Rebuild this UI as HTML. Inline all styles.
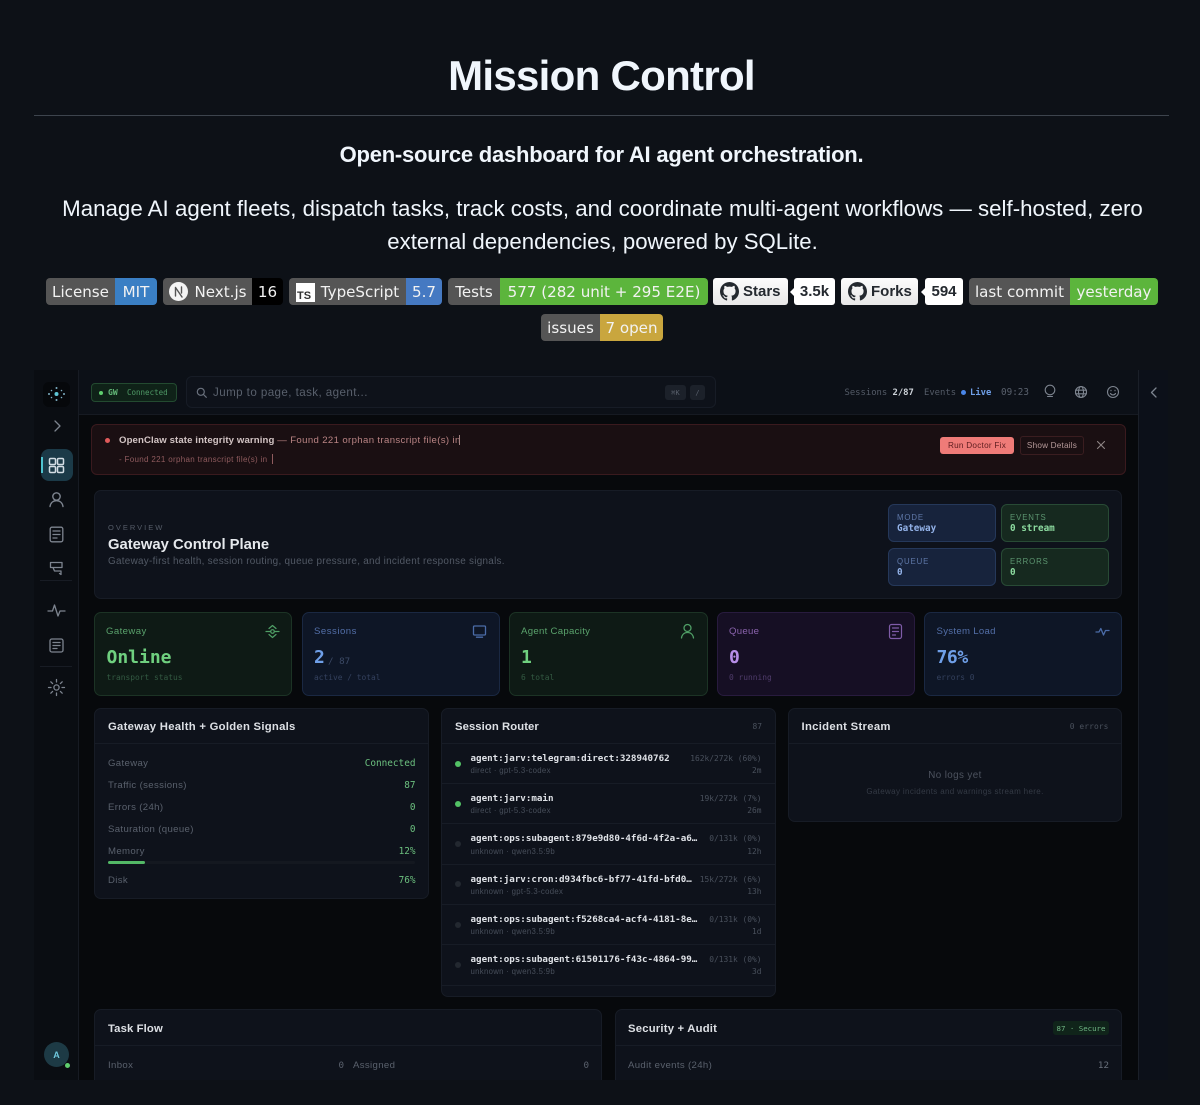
<!DOCTYPE html>
<html lang="en"><head><meta charset="utf-8"><title>Mission Control</title>
<style>
html,body{margin:0;padding:0;background:#0d1117;width:1200px;height:1105px;overflow:hidden}
body{position:relative;font-family:"Liberation Sans",sans-serif;color:#f0f6fc}
.a,.t,.m,svg.i{position:absolute}
.t,.m{white-space:nowrap;line-height:14px;height:14px;margin-top:1px}
.m{font-family:"DejaVu Sans Mono","Liberation Mono",monospace}
.c{text-align:center}
#clip{position:absolute;left:0;top:0;width:1200px;height:1080px;overflow:hidden}
svg.i{fill:none;stroke-linecap:round;stroke-linejoin:round}
.b{position:absolute;height:27px;line-height:28px;font-family:"DejaVu Sans",sans-serif;font-size:15.1px;color:#f2f2f2;text-align:center;white-space:nowrap;overflow:hidden}
.gh{position:absolute;height:27px;border-radius:3px;line-height:28px;font-weight:bold;font-size:15px;color:#24292f;white-space:nowrap}
.p{position:absolute;background:#0e121b;border:1px solid #171c26;border-radius:7px;box-sizing:border-box}
.st{position:absolute;top:612px;height:84px;border-radius:7px;box-sizing:border-box;border:1px solid}
.tile{position:absolute;width:108px;height:38px;border-radius:6px;box-sizing:border-box;border:1px solid}
.ln{position:absolute;height:1px;background:#171c26}
.lab{font-size:9.6px;color:#5a616d;letter-spacing:.35px}
.val{font-size:9.4px;color:#6cc07f;text-align:right}
.sn{font-size:9.2px;color:#dfe2e7;font-weight:bold}
.ss{font-size:7.8px;color:#474e5a;letter-spacing:.3px}
.sr{font-size:7.9px;color:#4a515d;text-align:right}
.big{height:20px;line-height:20px;font-size:18px;font-weight:bold;margin-top:2px}
</style></head><body>

<div class="t c" style="left:0;width:1203px;top:46px;height:60px;line-height:60px;font-size:42px;font-weight:bold;letter-spacing:-.7px;margin-top:0">Mission Control</div>
<div class="a" style="left:34px;top:115px;width:1135px;height:1px;background:#3d444d"></div>
<div class="t c" style="left:0;width:1203px;top:139px;height:30px;line-height:31px;font-size:22px;font-weight:bold;letter-spacing:-.22px;margin-top:0">Open-source dashboard for AI agent orchestration.</div>
<div class="t c" style="left:0;width:1205px;top:193px;height:30px;line-height:31px;font-size:22.3px;margin-top:0">Manage AI agent fleets, dispatch tasks, track costs, and coordinate multi-agent workflows — self-hosted, zero</div>
<div class="t c" style="left:0;width:1205px;top:226px;height:30px;line-height:31px;font-size:22.2px;margin-top:0">external dependencies, powered by SQLite.</div>

<!-- badges -->
<div class="b" style="left:46px;top:278px;width:69px;background:#555;border-radius:4px 0 0 4px">License</div>
<div class="b" style="left:115px;top:278px;width:42px;background:#3a7fc4;border-radius:0 4px 4px 0">MIT</div>
<div class="b" style="left:163px;top:278px;width:89px;background:#555;border-radius:4px 0 0 4px;padding-left:26px;box-sizing:border-box">Next.js</div>
<svg class="i" style="left:169px;top:282px" width="19" height="19" viewBox="0 0 19 19"><circle cx="9.5" cy="9.5" r="9.5" fill="#f4f4f4"/><path d="M6.5 14V5.5L13 15M12.5 5v6" stroke="#555" stroke-width="1.4"/></svg>
<div class="b" style="left:252px;top:278px;width:31px;background:#000;border-radius:0 4px 4px 0">16</div>
<div class="b" style="left:289px;top:278px;width:117px;background:#555;border-radius:4px 0 0 4px;padding-left:25px;box-sizing:border-box">TypeScript</div>
<div class="a" style="left:296px;top:283px;width:19px;height:19px;background:#fff"></div>
<div class="t" style="left:297px;top:291px;height:11px;line-height:11px;font-size:11px;font-weight:bold;color:#333;margin-top:0">TS</div>
<div class="b" style="left:406px;top:278px;width:36px;background:#4579c2;border-radius:0 4px 4px 0">5.7</div>
<div class="b" style="left:448px;top:278px;width:52px;background:#555;border-radius:4px 0 0 4px">Tests</div>
<div class="b" style="left:500px;top:278px;width:208px;background:#5cb53c;border-radius:0 4px 4px 0">577 (282 unit + 295 E2E)</div>

<div class="gh" style="left:713px;top:278px;width:75px;background:linear-gradient(#fcfcfc,#e8e8e8);padding-left:30px;box-sizing:border-box">Stars</div>
<svg class="i" style="left:720px;top:282px;fill:#24292f" width="19" height="19" viewBox="0 0 16 16"><path d="M8 0C3.58 0 0 3.58 0 8c0 3.54 2.29 6.53 5.47 7.59.4.07.55-.17.55-.38 0-.19-.01-.82-.01-1.49-2.01.37-2.53-.49-2.69-.94-.09-.23-.48-.94-.82-1.13-.28-.15-.68-.52-.01-.53.63-.01 1.08.58 1.23.82.72 1.21 1.87.87 2.33.66.07-.52.28-.87.51-1.07-1.78-.2-3.64-.89-3.64-3.95 0-.87.31-1.59.82-2.15-.08-.2-.36-1.02.08-2.12 0 0 .67-.21 2.2.82.64-.18 1.32-.27 2-.27.68 0 1.36.09 2 .27 1.53-1.04 2.2-.82 2.2-.82.44 1.1.16 1.92.08 2.12.51.56.82 1.27.82 2.15 0 3.07-1.87 3.75-3.65 3.95.29.25.54.73.54 1.48 0 1.07-.01 1.93-.01 2.2 0 .21.15.46.55.38A8.013 8.013 0 0016 8c0-4.42-3.58-8-8-8z"/></svg>
<div class="gh c" style="left:794px;top:278px;width:41px;background:#fff">3.5k</div>
<div class="a" style="left:790px;top:288px;border:4px solid transparent;border-right:4px solid #fff;border-left:0"></div>
<div class="gh" style="left:841px;top:278px;width:77px;background:linear-gradient(#fcfcfc,#e8e8e8);padding-left:30px;box-sizing:border-box">Forks</div>
<svg class="i" style="left:848px;top:282px;fill:#24292f" width="19" height="19" viewBox="0 0 16 16"><path d="M8 0C3.58 0 0 3.58 0 8c0 3.54 2.29 6.53 5.47 7.59.4.07.55-.17.55-.38 0-.19-.01-.82-.01-1.49-2.01.37-2.53-.49-2.69-.94-.09-.23-.48-.94-.82-1.13-.28-.15-.68-.52-.01-.53.63-.01 1.08.58 1.23.82.72 1.21 1.87.87 2.33.66.07-.52.28-.87.51-1.07-1.78-.2-3.64-.89-3.64-3.95 0-.87.31-1.59.82-2.15-.08-.2-.36-1.02.08-2.12 0 0 .67-.21 2.2.82.64-.18 1.32-.27 2-.27.68 0 1.36.09 2 .27 1.53-1.04 2.2-.82 2.2-.82.44 1.1.16 1.92.08 2.12.51.56.82 1.27.82 2.15 0 3.07-1.87 3.75-3.65 3.95.29.25.54.73.54 1.48 0 1.07-.01 1.93-.01 2.2 0 .21.15.46.55.38A8.013 8.013 0 0016 8c0-4.42-3.58-8-8-8z"/></svg>
<div class="gh c" style="left:925px;top:278px;width:38px;background:#fff">594</div>
<div class="a" style="left:921px;top:288px;border:4px solid transparent;border-right:4px solid #fff;border-left:0"></div>
<div class="b" style="left:969px;top:278px;width:101px;background:#555;border-radius:4px 0 0 4px">last commit</div>
<div class="b" style="left:1070px;top:278px;width:88px;background:#5cb53c;border-radius:0 4px 4px 0">yesterday</div>
<div class="b" style="left:541px;top:314px;width:59px;background:#555;border-radius:4px 0 0 4px">issues</div>
<div class="b" style="left:600px;top:314px;width:63px;background:#c9a63e;border-radius:0 4px 4px 0">7 open</div>

<div id="clip">
<!-- app frame -->
<div class="a" style="left:34px;top:370px;width:1134px;height:710px;background:#07090c"></div>
<div class="a" style="left:34px;top:370px;width:45px;height:710px;background:#0a0d12;border-right:1px solid #171b23;box-sizing:border-box"></div>
<div class="a" style="left:79px;top:370px;width:1060px;height:45px;background:#0c1017;border-bottom:1px solid #161a22;box-sizing:border-box"></div>
<div class="a" style="left:1138px;top:370px;width:30px;height:710px;background:#0c1019;border-left:1px solid #1a1f28;box-sizing:border-box"></div>

<!-- sidebar -->
<div class="a" style="left:43px;top:382px;width:27px;height:25px;background:#06080b;border-radius:6px"></div>
<svg class="i" style="left:46px;top:384px" width="21" height="20" viewBox="0 0 21 20"><circle cx="10.5" cy="10" r="2" fill="#5fc6d6"/><g fill="#7fb0c4"><circle cx="10.5" cy="4" r="1"/><circle cx="10.5" cy="16" r="1"/><circle cx="3" cy="10" r="1"/><circle cx="18" cy="10" r="1"/><circle cx="5.5" cy="6.5" r=".8"/><circle cx="15.5" cy="6.5" r=".8"/><circle cx="5.5" cy="13.5" r=".8"/><circle cx="15.5" cy="13.5" r=".8"/></g></svg>
<svg class="i" style="left:50px;top:419px;stroke:#7d848f;stroke-width:1.3" width="14" height="14" viewBox="0 0 14 14"><path d="M5 2l5 5-5 5"/></svg>
<div class="a" style="left:41px;top:449px;width:32px;height:32px;background:#1b3a48;border-radius:8px"></div>
<div class="a" style="left:41px;top:457px;width:2px;height:16px;background:#4fc3d0"></div>
<svg class="i" style="left:48px;top:457px;stroke:#d3dde4;stroke-width:1.5" width="17" height="17" viewBox="0 0 17 17"><rect x="1.5" y="1.5" width="6" height="6" rx="1.2"/><rect x="9.5" y="1.5" width="6" height="6" rx="1.2"/><rect x="1.5" y="9.5" width="6" height="6" rx="1.2"/><rect x="9.5" y="9.5" width="6" height="6" rx="1.2"/></svg>
<svg class="i" style="left:48px;top:491px;stroke:#7d848f;stroke-width:1.4" width="17" height="17" viewBox="0 0 17 17"><circle cx="8.5" cy="5.5" r="3.7"/><path d="M2 15.5c.6-3.6 3-5.8 6.5-5.8s5.9 2.2 6.5 5.8"/></svg>
<svg class="i" style="left:48px;top:526px;stroke:#7d848f;stroke-width:1.3" width="17" height="17" viewBox="0 0 17 17"><rect x="2.2" y="1.2" width="12.6" height="14.6" rx="1.8"/><path d="M5 5h7M5 8.5h7M5 12h4"/></svg>
<svg class="i" style="left:48px;top:559px;stroke:#7d848f;stroke-width:1.3" width="17" height="17" viewBox="0 0 17 17"><path d="M2.5 3.5H14v5H2.500zM5 8.500l1.500 3.500H13v3.500l-1.500-1"/></svg>
<div class="a" style="left:40px;top:580px;width:32px;height:1px;background:#181c24"></div>
<svg class="i" style="left:47px;top:602px;stroke:#7d848f;stroke-width:1.3" width="19" height="17" viewBox="0 0 19 17"><path d="M1 9h4.500l2-6 3.500 11 2-5h5"/></svg>
<svg class="i" style="left:48px;top:637px;stroke:#7d848f;stroke-width:1.3" width="17" height="17" viewBox="0 0 17 17"><rect x="2" y="2" width="13" height="13" rx="1.800"/><path d="M5 5.500h7M5 8.500h7M5 11.500h4"/></svg>
<div class="a" style="left:40px;top:666px;width:32px;height:1px;background:#181c24"></div>
<svg class="i" style="left:47px;top:678px;stroke:#7d848f;stroke-width:1.3" width="19" height="19" viewBox="0 0 19 19"><circle cx="9.500" cy="9.500" r="2.600"/><path d="M9.500 1.500v2.500M9.500 15v2.500M1.500 9.500H4M15 9.500h2.500M3.800 3.800l1.800 1.800M13.400 13.400l1.800 1.800M15.200 3.800l-1.800 1.800M5.600 13.400l-1.800 1.800"/></svg>
<div class="a" style="left:44px;top:1042px;width:25px;height:25px;border-radius:50%;background:#1d3a45"></div>
<div class="t c" style="left:44px;top:1047px;width:25px;font-size:9px;font-weight:bold;color:#6fc7dc">A</div>
<div class="a" style="left:64.500px;top:1062.500px;width:5px;height:5px;border-radius:50%;background:#5fce6e"></div>

<!-- topbar -->
<div class="a" style="left:91px;top:383px;width:86px;height:19px;background:#0f2218;border:1px solid #234a30;border-radius:4px;box-sizing:border-box"></div>
<div class="a" style="left:98.500px;top:390.500px;width:4px;height:4px;border-radius:50%;background:#5fce6e"></div>
<div class="m" style="left:108px;top:385px;font-size:8px;font-weight:bold;color:#63b878">GW</div>
<div class="m" style="left:127px;top:384.500px;font-size:7.500px;color:#4f9a66">Connected</div>
<div class="a" style="left:186px;top:376px;width:530px;height:32px;background:#0e121a;border:1px solid #171c26;border-radius:6px;box-sizing:border-box"></div>
<svg class="i" style="left:196px;top:387px;stroke:#6a717d;stroke-width:1.200" width="11" height="11" viewBox="0 0 11 11"><circle cx="4.800" cy="4.800" r="3.500"/><path d="M7.500 7.500l2.800 2.800"/></svg>
<div class="t" style="left:213px;top:385px;font-size:11.600px;color:#59606c;letter-spacing:.42px">Jump to page, task, agent...</div>
<div class="a" style="left:665px;top:385px;width:21px;height:15px;background:#1c212a;border-radius:3px"></div>
<div class="m c" style="left:665px;top:384.500px;width:21px;font-size:7px;color:#5a616d">⌘K</div>
<div class="a" style="left:690px;top:385px;width:15px;height:15px;background:#1c212a;border-radius:3px"></div>
<div class="m c" style="left:690px;top:384.500px;width:15px;font-size:7px;color:#5a616d">/</div>
<div class="m" style="left:844.500px;top:385px;font-size:8.900px;color:#545b67">Sessions</div>
<div class="m" style="left:892.500px;top:385px;font-size:8.900px;color:#cdd2d8;font-weight:bold">2/87</div>
<div class="m" style="left:924px;top:385px;font-size:8.900px;color:#545b67">Events</div>
<div class="a" style="left:961px;top:390px;width:5px;height:5px;border-radius:50%;background:#4a86e8"></div>
<div class="m" style="left:970px;top:385px;font-size:8.900px;color:#6f9fe8;font-weight:bold">Live</div>
<div class="m" style="left:1001px;top:385px;font-size:9.300px;color:#5a616d">09:23</div>
<svg class="i" style="left:1043px;top:384px;stroke:#7d848f;stroke-width:1.100" width="14" height="15" viewBox="0 0 14 15"><circle cx="7" cy="6" r="4.800"/><path d="M4.500 12.500h5"/></svg>
<svg class="i" style="left:1074px;top:385px;stroke:#7d848f;stroke-width:1.100" width="14" height="14" viewBox="0 0 14 14"><circle cx="7" cy="7" r="5.500"/><ellipse cx="7" cy="7" rx="2.500" ry="5.500"/><path d="M1.500 5.200h11M1.500 8.800h11"/></svg>
<svg class="i" style="left:1105.500px;top:385px;stroke:#7d848f;stroke-width:1.100" width="14" height="14" viewBox="0 0 14 14"><circle cx="7" cy="7" r="5.500"/><path d="M4.500 8.500c.7 1 1.500 1.400 2.500 1.400s1.800-.4 2.500-1.400M5 5.300v.5M9 5.300v.5"/></svg>
<svg class="i" style="left:1148px;top:386px;stroke:#7d848f;stroke-width:1.300" width="12" height="13" viewBox="0 0 12 13"><path d="M8 2L3.500 6.500 8 11"/></svg>

<!-- alert -->
<div class="a" style="left:91px;top:424px;width:1035px;height:51px;background:#1a0f12;border:1px solid #3a1a1e;border-radius:6px;box-sizing:border-box"></div>
<div class="a" style="left:105px;top:437.500px;width:5px;height:5px;border-radius:50%;background:#e05a5a"></div>
<div class="t" style="left:119px;top:433px;font-size:9.600px;font-weight:bold;color:#d3c5c5;letter-spacing:.11px">OpenClaw state integrity warning <span style="font-weight:normal;color:#b98484;letter-spacing:.36px">— Found 221 orphan transcript file(s) in</span></div>
<div class="a" style="left:459px;top:435px;width:1px;height:10px;background:#a08080"></div>
<div class="t" style="left:119px;top:452px;font-size:8px;color:#8f5b5e;letter-spacing:.32px">- Found 221 orphan transcript file(s) in</div>
<div class="a" style="left:272px;top:454px;width:1px;height:10px;background:#8f5b5e"></div>
<div class="a" style="left:940px;top:437px;width:74px;height:17px;background:#ef7b78;border-radius:3px"></div>
<div class="t c" style="left:940px;top:438px;width:74px;font-size:8.200px;color:#5c1c1e;letter-spacing:.25px">Run Doctor Fix</div>
<div class="a" style="left:1020px;top:436px;width:64px;height:19px;border:1px solid #3a1d20;border-radius:3px;box-sizing:border-box"></div>
<div class="t c" style="left:1020px;top:438px;width:64px;font-size:8.200px;color:#b69a9a;letter-spacing:.2px">Show Details</div>
<svg class="i" style="left:1096px;top:440px;stroke:#8f8585;stroke-width:1.100" width="10" height="10" viewBox="0 0 10 10"><path d="M1.500 1.500l7 7M8.500 1.500l-7 7"/></svg>

<!-- overview -->
<div class="p" style="left:94px;top:490px;width:1028px;height:109px"></div>
<div class="t" style="left:108px;top:520px;font-size:7.500px;color:#555c68;letter-spacing:2px">OVERVIEW</div>
<div class="t" style="left:108px;top:536.500px;font-size:14.800px;font-weight:bold;color:#e6e9ed;letter-spacing:0">Gateway Control Plane</div>
<div class="t" style="left:108px;top:554px;font-size:9.900px;color:#525965;letter-spacing:.29px">Gateway-first health, session routing, queue pressure, and incident response signals.</div>
<div class="tile" style="left:888px;top:504px;background:#17233c;border-color:#25385a"></div>
<div class="tile" style="left:1001px;top:504px;background:#16291f;border-color:#284a35"></div>
<div class="tile" style="left:888px;top:548px;background:#17233c;border-color:#25385a"></div>
<div class="tile" style="left:1001px;top:548px;background:#16291f;border-color:#284a35"></div>
<div class="t" style="left:897px;top:510px;font-size:7.800px;color:#5f78a8;letter-spacing:.9px">MODE</div>
<div class="m" style="left:897px;top:521px;font-size:9.300px;color:#93b2e8;font-weight:bold">Gateway</div>
<div class="t" style="left:1010px;top:510px;font-size:7.800px;color:#5c9570;letter-spacing:.9px">EVENTS</div>
<div class="m" style="left:1010px;top:521px;font-size:9.300px;color:#8ddba0;font-weight:bold">0 stream</div>
<div class="t" style="left:897px;top:554px;font-size:7.800px;color:#5f78a8;letter-spacing:.9px">QUEUE</div>
<div class="m" style="left:897px;top:565px;font-size:9.300px;color:#93b2e8;font-weight:bold">0</div>
<div class="t" style="left:1010px;top:554px;font-size:7.800px;color:#5c9570;letter-spacing:.9px">ERRORS</div>
<div class="m" style="left:1010px;top:565px;font-size:9.300px;color:#8ddba0;font-weight:bold">0</div>

<!-- stats -->
<div class="st" style="left:94px;width:198px;background:#0e1a15;border-color:#1c3325"></div>
<div class="t" style="left:106px;top:624px;font-size:9.600px;color:#5aa26c;letter-spacing:.4px">Gateway</div>
<div class="m big" style="left:106.500px;top:646px;color:#6fd07f">Online</div>
<div class="m" style="left:106.500px;top:670px;font-size:7.900px;color:#335a42">transport status</div>
<svg class="i" style="left:265px;top:624px;stroke:#4f9f66;stroke-width:1.200" width="15" height="15" viewBox="0 0 15 15"><circle cx="7.500" cy="7.500" r="1.800"/><path d="M1 7.500h4M10 7.500h4M4 4.500l3.500-3 3.500 3M4 10.500l3.500 3 3.500-3"/></svg>

<div class="st" style="left:302px;width:198px;background:#0e1626;border-color:#1a2842"></div>
<div class="t" style="left:314px;top:624px;font-size:9.600px;color:#536fa8;letter-spacing:.5px">Sessions</div>
<div class="m big" style="left:314px;top:646px;color:#6f9fe8">2</div>
<div class="m" style="left:328px;top:653.500px;font-size:9.200px;color:#3c4a66">/ 87</div>
<div class="m" style="left:314px;top:670px;font-size:7.900px;color:#34415e">active / total</div>
<svg class="i" style="left:472px;top:624px;stroke:#4b6ca8;stroke-width:1.300" width="15" height="15" viewBox="0 0 15 15"><rect x="1.500" y="2" width="12" height="9" rx="1"/><path d="M4.500 13.200h6"/></svg>

<div class="st" style="left:509px;width:199px;background:#0e1a15;border-color:#1c3325"></div>
<div class="t" style="left:521px;top:624px;font-size:9.600px;color:#5aa26c;letter-spacing:.3px">Agent Capacity</div>
<div class="m big" style="left:521px;top:646px;color:#6fd07f">1</div>
<div class="m" style="left:521px;top:670px;font-size:7.900px;color:#335a42">6 total</div>
<svg class="i" style="left:680px;top:623px;stroke:#4f9f66;stroke-width:1.300" width="15" height="16" viewBox="0 0 15 16"><circle cx="7.500" cy="5" r="3.500"/><path d="M1.500 15c.5-3.500 2.800-5.500 6-5.500s5.500 2 6 5.500"/></svg>

<div class="st" style="left:717px;width:198px;background:#160f24;border-color:#281b3e"></div>
<div class="t" style="left:729px;top:624px;font-size:9.600px;color:#8a63ad;letter-spacing:.3px">Queue</div>
<div class="m big" style="left:729px;top:646px;color:#b78ee8">0</div>
<div class="m" style="left:729px;top:670px;font-size:7.900px;color:#4f3b6b">0 running</div>
<svg class="i" style="left:888px;top:623px;stroke:#7f5ca8;stroke-width:1.200" width="15" height="17" viewBox="0 0 15 17"><rect x="1.500" y="1.500" width="12" height="14" rx="2"/><path d="M4.500 5h6M4.500 8.500h6M4.500 12h3"/></svg>

<div class="st" style="left:924px;width:198px;background:#0e1626;border-color:#1a2842"></div>
<div class="t" style="left:936.500px;top:624px;font-size:9.600px;color:#536fa8;letter-spacing:.3px">System Load</div>
<div class="m big" style="left:936.500px;top:646px;color:#6f9fe8;letter-spacing:-.4px">76%</div>
<div class="m" style="left:936.500px;top:670px;font-size:7.900px;color:#34415e">errors 0</div>
<svg class="i" style="left:1095px;top:625px;stroke:#4b6ca8;stroke-width:1.300" width="15" height="14" viewBox="0 0 15 14"><path d="M1 7h3l1.800-3.500L8.500 10l2-4.500H14"/></svg>

<!-- panels -->
<div class="p" style="left:94px;top:708px;width:335px;height:191px"></div>
<div class="ln" style="left:95px;top:743px;width:333px"></div>
<div class="t" style="left:108px;top:719px;font-size:11.300px;font-weight:bold;color:#dde0e5;letter-spacing:.27px">Gateway Health + Golden Signals</div>
<div class="t lab" style="left:108px;top:756px">Gateway</div>
<div class="m val" style="left:300px;width:115.500px;top:756px">Connected</div>
<div class="t lab" style="left:108px;top:778px">Traffic (sessions)</div>
<div class="m val" style="left:300px;width:115.500px;top:778px">87</div>
<div class="t lab" style="left:108px;top:800px">Errors (24h)</div>
<div class="m val" style="left:300px;width:115.500px;top:800px">0</div>
<div class="t lab" style="left:108px;top:822px">Saturation (queue)</div>
<div class="m val" style="left:300px;width:115.500px;top:822px">0</div>
<div class="t lab" style="left:108px;top:844px">Memory</div>
<div class="m val" style="left:300px;width:115.500px;top:844px">12%</div>
<div class="a" style="left:108px;top:861px;width:307px;height:3px;background:#141820;border-radius:2px"></div>
<div class="a" style="left:108px;top:861px;width:37px;height:3px;background:#53b866;border-radius:2px"></div>
<div class="t lab" style="left:108px;top:873px">Disk</div>
<div class="m val" style="left:300px;width:115.500px;top:873px">76%</div>

<!-- session router -->
<div class="p" style="left:441px;top:708px;width:335px;height:289px;overflow:hidden">
 <div class="m sn" style="left:28px;top:284px">agent:ops:subagent:05f770-5c997b-447d-b…</div>
 <div class="m sr" style="left:220px;width:100.500px;top:284px">0/131k (0%)</div>
</div>
<div class="ln" style="left:442px;top:743px;width:333px"></div>
<div class="t" style="left:455px;top:719px;font-size:11.300px;font-weight:bold;color:#dde0e5;letter-spacing:.07px">Session Router</div>
<div class="m sr" style="left:700px;width:62px;top:719px">87</div>

<div class="a" style="left:455px;top:760.500px;width:6px;height:6px;border-radius:50%;background:#53c266"></div>
<div class="m sn" style="left:470.500px;top:751px">agent:jarv:telegram:direct:328940762</div>
<div class="t ss" style="left:470.500px;top:763px">direct · gpt-5.3-codex</div>
<div class="m sr" style="left:660px;width:101.500px;top:751px">162k/272k (60%)</div>
<div class="m sr" style="left:660px;width:101.500px;top:763px">2m</div>
<div class="ln" style="left:442px;top:783px;width:333px"></div>

<div class="a" style="left:455px;top:801px;width:6px;height:6px;border-radius:50%;background:#53c266"></div>
<div class="m sn" style="left:470.500px;top:791px">agent:jarv:main</div>
<div class="t ss" style="left:470.500px;top:803px">direct · gpt-5.3-codex</div>
<div class="m sr" style="left:660px;width:101.500px;top:791px">19k/272k (7%)</div>
<div class="m sr" style="left:660px;width:101.500px;top:803px">26m</div>
<div class="ln" style="left:442px;top:823px;width:333px"></div>

<div class="a" style="left:455px;top:841px;width:6px;height:6px;border-radius:50%;background:#232830"></div>
<div class="m sn" style="left:470.500px;top:831px">agent:ops:subagent:879e9d80-4f6d-4f2a-a6…</div>
<div class="t ss" style="left:470.500px;top:843.500px">unknown · qwen3.5:9b</div>
<div class="m sr" style="left:660px;width:101.500px;top:831px">0/131k (0%)</div>
<div class="m sr" style="left:660px;width:101.500px;top:843.500px">12h</div>
<div class="ln" style="left:442px;top:864px;width:333px"></div>

<div class="a" style="left:455px;top:881px;width:6px;height:6px;border-radius:50%;background:#232830"></div>
<div class="m sn" style="left:470.500px;top:872px">agent:jarv:cron:d934fbc6-bf77-41fd-bfd0…</div>
<div class="t ss" style="left:470.500px;top:883.500px">unknown · gpt-5.3-codex</div>
<div class="m sr" style="left:660px;width:101.500px;top:872px">15k/272k (6%)</div>
<div class="m sr" style="left:660px;width:101.500px;top:883.500px">13h</div>
<div class="ln" style="left:442px;top:904px;width:333px"></div>

<div class="a" style="left:455px;top:921.500px;width:6px;height:6px;border-radius:50%;background:#232830"></div>
<div class="m sn" style="left:470.500px;top:912px">agent:ops:subagent:f5268ca4-acf4-4181-8e…</div>
<div class="t ss" style="left:470.500px;top:924px">unknown · qwen3.5:9b</div>
<div class="m sr" style="left:660px;width:101.500px;top:912px">0/131k (0%)</div>
<div class="m sr" style="left:660px;width:101.500px;top:923.500px">1d</div>
<div class="ln" style="left:442px;top:944px;width:333px"></div>

<div class="a" style="left:455px;top:962px;width:6px;height:6px;border-radius:50%;background:#232830"></div>
<div class="m sn" style="left:470.500px;top:952px">agent:ops:subagent:61501176-f43c-4864-99…</div>
<div class="t ss" style="left:470.500px;top:964px">unknown · qwen3.5:9b</div>
<div class="m sr" style="left:660px;width:101.500px;top:952px">0/131k (0%)</div>
<div class="m sr" style="left:660px;width:101.500px;top:964px">3d</div>
<div class="ln" style="left:442px;top:985px;width:333px"></div>

<!-- incident -->
<div class="p" style="left:788px;top:708px;width:334px;height:114px"></div>
<div class="ln" style="left:789px;top:743px;width:332px"></div>
<div class="t" style="left:801.500px;top:719px;font-size:11.300px;font-weight:bold;color:#dde0e5;letter-spacing:.3px">Incident Stream</div>
<div class="m sr" style="left:1000px;width:108.500px;top:719px;letter-spacing:.1px">0 errors</div>
<div class="t c" style="left:788px;width:334px;top:768px;font-size:9.800px;color:#4d535f;letter-spacing:.4px">No logs yet</div>
<div class="t c" style="left:788px;width:334px;top:783.500px;font-size:8px;color:#343a45;letter-spacing:.35px">Gateway incidents and warnings stream here.</div>

<!-- bottom -->
<div class="p" style="left:94px;top:1009px;width:508px;height:120px"></div>
<div class="ln" style="left:95px;top:1045px;width:506px"></div>
<div class="t" style="left:108px;top:1021px;font-size:11.300px;font-weight:bold;color:#dde0e5;letter-spacing:.12px">Task Flow</div>
<div class="t lab" style="left:108px;top:1058px">Inbox</div>
<div class="m sr" style="left:300px;width:44px;top:1058px;font-size:9.200px;color:#5a616d">0</div>
<div class="t lab" style="left:353px;top:1058px">Assigned</div>
<div class="m sr" style="left:500px;width:89px;top:1058px;font-size:9.200px;color:#5a616d">0</div>

<div class="p" style="left:615px;top:1009px;width:507px;height:120px"></div>
<div class="ln" style="left:616px;top:1045px;width:505px"></div>
<div class="t" style="left:628px;top:1021px;font-size:11.300px;font-weight:bold;color:#dde0e5;letter-spacing:.2px">Security + Audit</div>
<div class="a" style="left:1053px;top:1021px;width:56px;height:14px;background:#10241a;border-radius:3px"></div>
<div class="m c" style="left:1053px;top:1020.500px;width:56px;font-size:7.400px;color:#6fb583">87 · Secure</div>
<div class="t lab" style="left:628px;top:1058px">Audit events (24h)</div>
<div class="m sr" style="left:1000px;width:109px;top:1058px;font-size:9.200px;color:#6a717d">12</div>
</div>
</body></html>
